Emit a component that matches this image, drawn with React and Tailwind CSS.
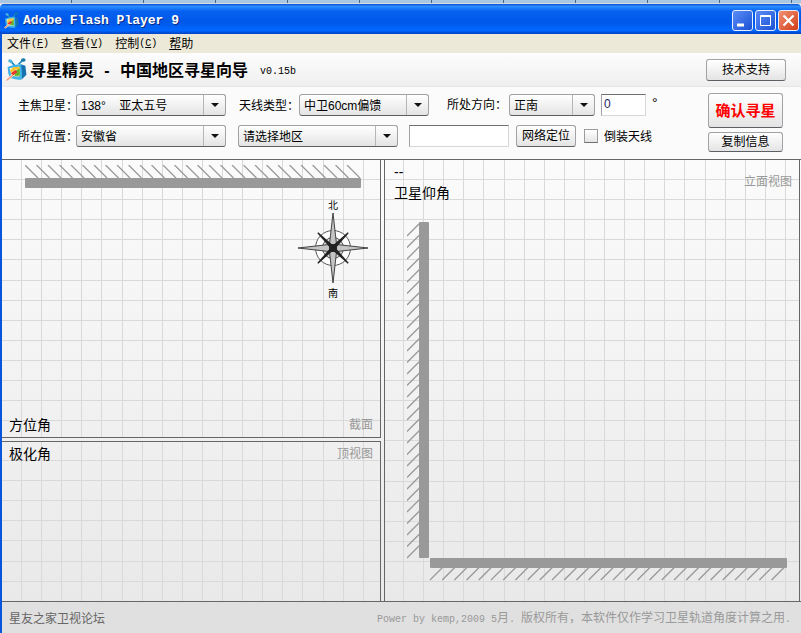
import { useState } from "react";
import clsx from "clsx";

const GRID_STEP = 20.1;
const HATCH_COUNT = 29;

const MONO = "font-['Liberation_Mono',monospace] text-[10px]";

const menuItems = [
  { text: "文件", hotkey: "F" },
  { text: "查看", hotkey: "V" },
  { text: "控制", hotkey: "C" },
];

// little TV set logo
const TvIcon = ({ className }) => (
  <svg viewBox="0 0 20 22" className={className} aria-hidden="true">
    <path d="M8 7 4.500 3M12 6l4-4" stroke="#1a86b8" strokeWidth="1.6" />
    <ellipse cx="4.200" cy="3" rx="2.300" ry="1.600" fill="#4fb4da" transform="rotate(30 4.200 3)" />
    <ellipse cx="16.500" cy="1.900" rx="2.200" ry="1.600" fill="#1577a8" />
    <path d="M14 6 18.500 7.500 19.500 16l-4.500 4.500z" fill="#1673b0" />
    <path d="M1.500 8.500Q8 5.500 14.500 6q1 7 .5 14.500-6 .8-11.500-1.500-2-5-2-10.500z" fill="#3fb2e6" />
    <path d="M3.500 9.800q4.500-1.600 9.300-1.500l.4 9.200q-4.500.5-8.200-1z" fill="#fff6b8" />
    <path d="m4 12 3-3.200 5.800-.5.200 3.200-4-.4-4 3z" fill="#fbc02a" />
    <path d="m8.500 12.500 4.500-2.500.3 7-5 .3z" fill="#63b82e" />
    <path d="m4.500 14.500 4.500-3 2 1.800-4 3.200z" fill="#e8342a" />
    <path d="m0 20.500 5-4.500 2 1.500-5 4z" fill="#fbd9b8" />
    <path d="m.5 21.500 6-5" stroke="#e8684a" strokeWidth=".8" />
  </svg>
);

const WindowButton = ({ label, className, children }) => (
  <button
    aria-label={label}
    className={clsx(
      "flex size-[21px] items-center justify-center rounded-[3px] border border-[#e8eefc]",
      className
    )}
  >
    <svg viewBox="0 0 19 19" className="size-[19px]" fill="none" stroke="#fff">
      {children}
    </svg>
  </button>
);

const Button = ({ className, children }) => (
  <button
    type="button"
    className={clsx(
      "rounded-[3px] border border-[#a0a2a5] border-b-[#5c5f63] bg-linear-to-b from-white to-[#e4e4e4] text-center whitespace-nowrap",
      className
    )}
  >
    {children}
  </button>
);

const Select = ({ id, label, className, options }) => (
  <div className={clsx("relative h-[22px] shrink-0", className)}>
    <select
      id={id}
      aria-label={label}
      className="h-full w-full appearance-none rounded-[3px] border border-[#a0a2a5] border-b-[#5c5f63] bg-linear-to-b from-white to-[#e4e4e4] pt-0.5 pr-6 pl-1 text-xs"
    >
      {options.map((o) => (
        <option key={o}>{o}</option>
      ))}
    </select>
    <span className="pointer-events-none absolute inset-y-px right-px flex w-[22px] items-center justify-center border-l border-[#b4b6b8]">
      <svg viewBox="0 0 8 4" className="h-1 w-2">
        <path d="M0 0h8L4 4z" fill="#111" />
      </svg>
    </span>
  </div>
);

// graph paper behind each view
const Grid = ({ x, y }) => (
  <svg className="absolute inset-0 size-full" stroke="#d9d9d9" shapeRendering="crispEdges" aria-hidden="true">
    {Array.from({ length: 100 }, (_, i) => {
      const px = Math.round(x + i * GRID_STEP) + 0.5;
      return <line key={i} x1={px} x2={px} y1="0" y2="100%" />;
    })}
    {Array.from({ length: 80 }, (_, i) => {
      const py = Math.round(y + i * GRID_STEP) + 0.5;
      return <line key={i} x1="0" x2="100%" y1={py} y2={py} />;
    })}
  </svg>
);

const hatch = Array.from({ length: HATCH_COUNT }, (_, i) => i);

// wall seen from above
const TopWall = () => (
  <svg viewBox="0 0 337 23" className="h-[23px] w-[337px]" stroke="#999" strokeWidth="1.3">
    {hatch.map((i) => (
      <line key={i} x1={i * 11.5} y1="0" x2={i * 11.5 + 13} y2="13" />
    ))}
    <rect y="13" width="336" height="10" rx="1" fill="#999" stroke="none" />
  </svg>
);

// wall and floor seen from the side
const SideWall = () => (
  <svg viewBox="0 0 380 359" className="h-[359px] w-[380px]" stroke="#999" strokeWidth="1.3">
    {hatch.map((i) => (
      <line key={i} x1="0" y1={14 + i * 11.5} x2="13" y2={1 + i * 11.5} />
    ))}
    <rect x="12" width="10" height="336" rx="1" fill="#999" stroke="none" />
    {hatch.map((i) => (
      <line key={i} x1={23 + i * 12.2} y1="358" x2={36 + i * 12.2} y2="345" />
    ))}
    <rect x="23" y="336" width="357" height="10" rx="1" fill="#999" stroke="none" />
  </svg>
);

const Compass = () => (
  <div className="flex w-[72px] flex-col items-center text-[10px] leading-3">
    <span>北</span>
    <svg viewBox="-36 -36 72 72" className="size-[72px]">
      <circle r="17.5" fill="#fff" stroke="#555" />
      <circle r="10.5" fill="#ddd" stroke="#555" />
      {[0, 90, 180, 270].map((a) => (
        <path
          key={a}
          transform={`rotate(${a})`}
          d="M0-35 3.5-4 0 0-3.5-4z"
          fill="#c4c4c4"
          stroke="#333"
          strokeWidth=".9"
        />
      ))}
      {[45, 135, 225, 315].map((a) => (
        <path key={a} transform={`rotate(${a})`} d="M-.6-21.500H.6L2 0H-2z" fill="#222" />
      ))}
      <circle r="4" fill="#222" />
    </svg>
    <span className="pt-1">南</span>
  </div>
);

const App = () => {
  const [angle, setAngle] = useState("0");
  const [place, setPlace] = useState("");
  const [flipped, setFlipped] = useState(false);

  return (
    <div className="flex min-h-screen flex-col bg-[#fbfbfb] font-['Liberation_Sans','Noto_Sans_CJK_SC',sans-serif] text-xs text-black">
      {/* desktop strip above the window */}
      <div className="h-1 border-b border-[#d8dce0] bg-[repeating-linear-gradient(90deg,#a9c6e3_0px,#a9c6e3_71px,#48688c_71px,#48688c_72px)]" />

      {/* Title bar */}
      <header className="flex h-[30px] items-center rounded-t-sm bg-[linear-gradient(#0a4fd0,#2a8cff_8%,#0560f0_25%,#0058e8_60%,#0068ff_88%,#0040c0)] pt-0.5 pr-0.5 pl-1">
        <TvIcon className="h-[17px] w-[15px]" />
        <h1 className="ml-1 pt-0.5 font-['Liberation_Mono',monospace] text-[13px] font-bold text-white [text-shadow:1px_1px_#0a2a80]">
          Adobe Flash Player 9
        </h1>
        <div className="ml-auto flex gap-0.5">
          <WindowButton label="最小化" className="bg-linear-to-br from-[#5b8cf5] to-[#1a4fd6]">
            <path d="M4 14h7" strokeWidth="3" />
          </WindowButton>
          <WindowButton label="最大化" className="bg-linear-to-br from-[#5b8cf5] to-[#1a4fd6]">
            <path d="M4.500 4.500h10v10h-10zM4 5.500h11" />
          </WindowButton>
          <WindowButton label="关闭" className="bg-linear-to-br from-[#f09070] to-[#d03a10]">
            <path d="m4.500 4.500 10 10M14.500 4.500l-10 10" strokeWidth="2.200" />
          </WindowButton>
        </div>
      </header>

      <div className="flex flex-1 flex-col border-l-2 border-[#0855dd]">
        <nav className="flex h-[19px] items-center gap-3 bg-[#ece9d8] pl-[5px] leading-[18px]">
          {menuItems.map(({ text, hotkey }) => (
            <button key={hotkey} className="flex items-center">
              {text}
              <span className={MONO}>
                (<u>{hotkey}</u>)
              </span>
            </button>
          ))}
          <button>
            <u>帮</u>助
          </button>
        </nav>

        {/* App header */}
        <div className="flex h-[34px] items-center border-b border-[#e6e6e6] bg-linear-to-b from-[#fdfdfd] to-[#efefef] pr-[15px] pl-1">
          <TvIcon className="h-[23px] w-[21px]" />
          <h2 className="ml-[3px] flex pt-0.5 text-base font-bold">
            寻星精灵<span className="w-[26px] text-center">-</span>中国地区寻星向导
          </h2>
          <span className={clsx(MONO, "ml-3 pt-1")}>v0.15b</span>
          <Button className="ml-auto h-[22px] w-20">技术支持</Button>
        </div>

        {/* Settings */}
        <form className="flex h-[72px] items-start justify-between pt-1.5 pr-[18px] pl-4" onSubmit={(e) => e.preventDefault()}>
          <div className="flex flex-col gap-2">
            <div className="flex h-6 items-center">
              <label htmlFor="satellite" className="w-[58px] shrink-0 pt-0.5 whitespace-nowrap">主焦卫星：</label>
              <Select id="satellite" className="w-[150px]" options={["138°\u00a0\u00a0\u00a0\u00a0亚太五号"]} />
              <label htmlFor="antenna" className="ml-[13px] w-[60px] shrink-0 pt-0.5 whitespace-nowrap">天线类型：</label>
              <Select id="antenna" className="w-[130px]" options={["中卫60cm偏馈"]} />
              <label htmlFor="direction" className="ml-[18px] w-[62px] shrink-0 whitespace-nowrap">所处方向：</label>
              <Select id="direction" className="w-[86px]" options={["正南"]} />
              <input
                aria-label="方向角度"
                value={angle}
                onChange={(e) => setAngle(e.target.value)}
                className="ml-1.5 h-[22px] w-[45px] border border-[#d5d7d8] border-t-[#6e7072] border-l-[#a0a2a5] bg-white px-0.5 pb-0.5 text-[#1c1c5c]"
              />
              <span className="ml-1.5 pb-1 text-sm">°</span>
            </div>
            <div className="flex h-[22px] items-center">
              <label htmlFor="province" className="w-[58px] shrink-0 pt-0.5 whitespace-nowrap">所在位置：</label>
              <Select id="province" className="w-[150px]" options={["安徽省"]} />
              <Select id="region" label="地区" className="ml-3 w-40" options={["请选择地区"]} />
              <input
                aria-label="地名"
                value={place}
                onChange={(e) => setPlace(e.target.value)}
                className="ml-[11px] h-[22px] w-[100px] border border-[#d5d7d8] border-t-[#6e7072] border-l-[#a0a2a5] bg-white px-1"
              />
              <Button className="ml-[7px] h-[22px] w-[60px]">网络定位</Button>
              <input
                id="flipped"
                type="checkbox"
                checked={flipped}
                onChange={(e) => setFlipped(e.target.checked)}
                className="ml-2 size-3.5 appearance-none border border-[#9a9c9e] border-b-[#6e7072] bg-linear-to-b from-white to-[#e4e4e4] checked:bg-[#666]"
              />
              <label htmlFor="flipped" className="ml-1.5 pt-0.5">倒装天线</label>
            </div>
          </div>
          <div className="flex w-[75px] flex-col gap-1">
            <Button className="h-[35px] text-[15px] font-bold text-[#f00]">确认寻星</Button>
            <Button className="h-5">复制信息</Button>
          </div>
        </form>

        {/* Views */}
        <main className="grid flex-1 grid-cols-[379fr_416fr] grid-rows-[278fr_160fr] gap-[3px] border-y border-[#666] bg-linear-to-b from-[#fbfbfb] to-[#e9e9e9] pr-px">
          <section className="relative flex flex-col overflow-hidden border-r border-b border-[#666]">
            <Grid x={19} y={19} />
            <div className="relative flex flex-1 flex-col pt-[5px] pr-[7px] pb-1 pl-[7px]">
              <div className="pl-4">
                <TopWall />
              </div>
              <div className="mt-3 mr-1 self-end">
                <Compass />
              </div>
              <div className="mt-auto flex items-center justify-between leading-4">
                <h3 className="text-sm leading-4">方位角</h3>
                <span className="text-[#999]">截面</span>
              </div>
            </div>
          </section>

          <section className="relative row-span-2 overflow-hidden border-x border-[#666]">
            <Grid x={18} y={19} />
            <div className="relative flex justify-between pt-1 pr-[7px] pl-[9px]">
              <div className="text-sm leading-[22px]">
                <p className="leading-4">--</p>
                <h3 className="mt-0.5">卫星仰角</h3>
              </div>
              <span className="pt-2 leading-5 text-[#999]">立面视图</span>
            </div>
            <div className="relative mt-[18px] pl-[22px]">
              <SideWall />
            </div>
          </section>

          <section className="relative overflow-hidden border-t border-r border-[#666]">
            <Grid x={19} y={18} />
            <div className="relative flex items-center justify-between px-[7px] pt-1 leading-4">
              <h3 className="text-sm leading-4">极化角</h3>
              <span className="text-[#999]">顶视图</span>
            </div>
          </section>
        </main>

        <footer className="flex h-[31px] items-center justify-between bg-[#e0e0e0] pt-0.5 pr-[10px] pl-[7px]">
          <a href="#forum" className="text-[#666]">星友之家卫视论坛</a>
          <p className="text-[#999]">
            <span className={MONO}>Power by kemp,2009 5</span>月
            <span className={MONO}>. </span>版权所有，本软件仅作学习卫星轨道角度计算之用
            <span className={MONO}>.</span>
          </p>
        </footer>
      </div>
    </div>
  );
};

export default App;
